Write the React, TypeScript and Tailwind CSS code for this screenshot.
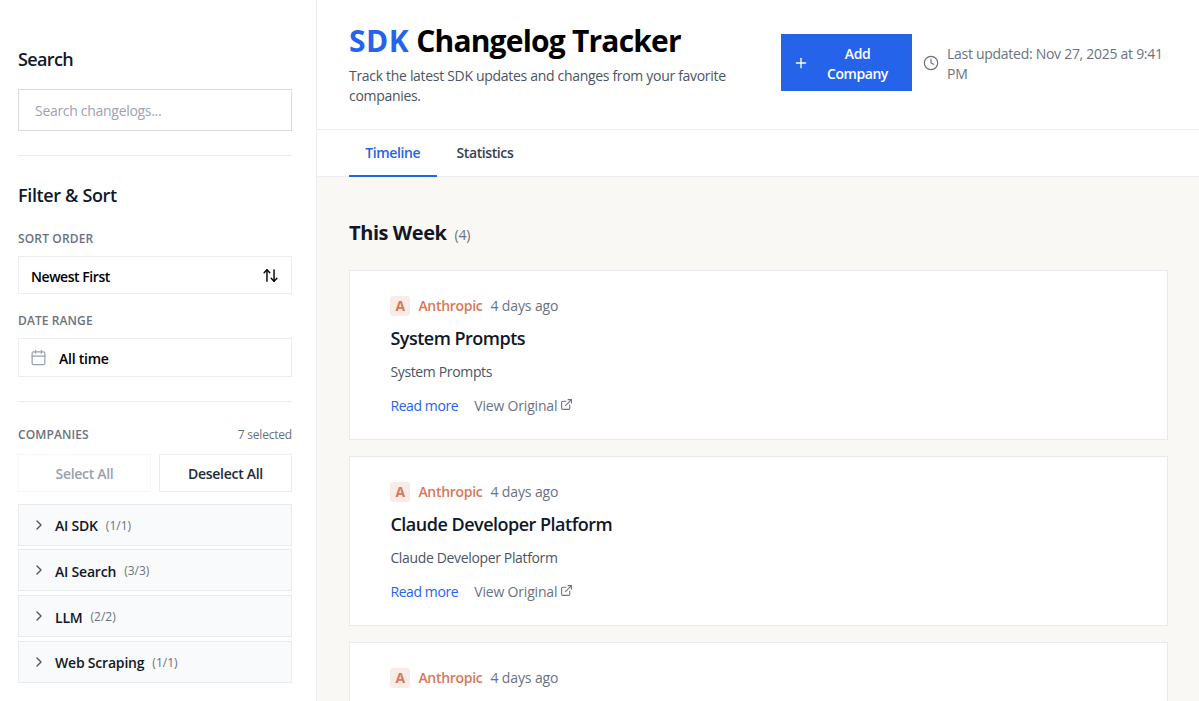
import { useState } from 'react'
import { clsx } from 'clsx'
import { ArrowUpDown, Calendar, ChevronRight, Clock, ExternalLink, Plus } from 'lucide-react'

interface Entry {
  company: string
  age: string
  title?: string
  summary?: string
}

interface Category {
  name: string
  selected: number
  total: number
}

const ENTRIES: Entry[] = [
  { company: 'Anthropic', age: '4 days ago', title: 'System Prompts', summary: 'System Prompts' },
  { company: 'Anthropic', age: '4 days ago', title: 'Claude Developer Platform', summary: 'Claude Developer Platform' },
  { company: 'Anthropic', age: '4 days ago' },
]

const CATEGORIES: Category[] = [
  { name: 'AI SDK', selected: 1, total: 1 },
  { name: 'AI Search', selected: 3, total: 3 },
  { name: 'LLM', selected: 2, total: 2 },
  { name: 'Web Scraping', selected: 1, total: 1 },
]

const TABS = ['Timeline', 'Statistics']

function Sidebar() {
  const [query, setQuery] = useState('')
  return (
    <aside className="w-[317px] shrink-0 border-r border-[#ebedf0] bg-white pr-6 pl-[18px] pt-[46px]">
      <h2 className="text-[18px] leading-[26px] font-semibold tracking-[-0.65px] text-gray-900">Search</h2>
      <input
        value={query}
        onChange={e => setQuery(e.target.value)}
        placeholder="Search changelogs..."
        className="mt-[17px] block h-[42px] w-full border border-[#d9dce2] px-4 text-[14px] tracking-[-0.3px] text-gray-900 outline-none placeholder:text-[#9ca3af]"
      />

      <div className="mt-6 border-t border-[#ebedf0] pt-[26px]">
        <h2 className="text-[18px] leading-[26px] font-semibold tracking-[-0.35px] text-gray-900">Filter &amp; Sort</h2>
        <div className="mt-[23px] text-[12px] leading-4 font-semibold tracking-[0.15px] text-gray-500">SORT ORDER</div>
        <button className="mt-[9px] flex h-[38px] w-full items-center justify-between border border-[#ebedf0] pt-[2px] pr-3 pl-3 text-[14px] font-semibold tracking-[-0.45px] text-black">
          Newest First
          <ArrowUpDown className="mb-[2px] size-[17px]" />
        </button>
        <div className="mt-[19px] text-[12px] leading-4 font-semibold tracking-[0.1px] text-gray-500">DATE RANGE</div>
        <button className="mt-[9px] flex h-[39px] w-full items-center border border-[#ebedf0] pt-[2px] pl-[11px] text-[14px] font-semibold tracking-[-0.25px] text-black">
          <Calendar className="mr-3 mb-[2px] size-[17px] text-gray-400" strokeWidth={1.75} />
          All time
        </button>
      </div>

      <div className="mt-6 border-t border-[#ebedf0] pt-[25px]">
        <div className="flex items-center justify-between text-[12px] leading-4">
          <span className="font-semibold tracking-[0.1px] text-gray-500">COMPANIES</span>
          <span className="tracking-[-0.2px] text-gray-500">7 selected</span>
        </div>
        <div className="mt-[11px] grid grid-cols-2 gap-2 text-[14px] font-semibold tracking-[-0.3px]">
          <button disabled className="h-[38px] border border-[#f5f6f7] text-gray-400">Select All</button>
          <button className="h-[38px] border border-[#ebedf0] text-gray-800">Deselect All</button>
        </div>
        <div className="mt-[11.6px] space-y-[3.8px]">
          {CATEGORIES.map(c => (
            <button key={c.name} className="flex h-[42px] w-full items-center border border-[#e8eaed] bg-gray-50 pl-3">
              <ChevronRight className="size-4 text-gray-600" />
              <span className="mt-[2px] ml-2 text-[14px] font-semibold tracking-[-0.2px] text-gray-900">{c.name}</span>
              <span className="mt-[2px] ml-2 text-[12px] text-gray-500">({c.selected}/{c.total})</span>
            </button>
          ))}
        </div>
      </div>
    </aside>
  )
}

function Header() {
  return (
    <header className="flex h-[130px] shrink-0 items-start border-b border-[#ebedf0] bg-white px-8 pt-6">
      <div className="w-[432px] shrink-0">
        <h1 className="text-[30px] leading-[33px] font-bold tracking-[-0.8px] text-black">
          <span className="tracking-[0.5px] text-[#2563eb]">SDK</span> Changelog Tracker
        </h1>
        <p className="mt-[9px] w-[400px] text-[14px] leading-[20.3px] tracking-[-0.31px] text-gray-600">
          Track the latest SDK updates and changes from your favorite companies.
        </p>
      </div>
      <button className="mt-[10px] flex h-[57px] w-[131px] shrink-0 items-center bg-[#2563eb] px-[11.5px] text-[14px] leading-5 font-semibold tracking-[-0.45px] text-white">
        <Plus className="size-4" />
        <span className="mt-[2px] ml-1.5 flex-1">Add<br />Company</span>
      </button>
      <div className="mt-5 ml-[11px] flex items-center gap-2 text-gray-500">
        <Clock className="mb-[2px] size-4 shrink-0" strokeWidth={1.75} />
        <span className="w-[224px] text-[14px] leading-5 tracking-[-0.28px]">Last updated: Nov 27, 2025 at 9:41 PM</span>
      </div>
    </header>
  )
}

function EntryCard({ entry }: { entry: Entry }) {
  return (
    <article className="h-[170px] border border-[#e8eaed] bg-white px-[40.4px] pt-[25px]">
      <div className="flex h-5 items-center text-[14px] leading-5">
        <span className="flex size-5 items-center justify-center rounded-[3px] bg-[#f9ece8] text-[14px] font-bold text-[#d97757]">{entry.company[0]}</span>
        <span className="ml-2 font-semibold tracking-[-0.3px] text-[#d97757]">{entry.company}</span>
        <span className="ml-2 tracking-[-0.12px] text-gray-500">{entry.age}</span>
      </div>
      {entry.title && (
        <>
          <h3 className="mt-2 text-[18px] leading-7 font-semibold tracking-[-0.5px] text-gray-900">{entry.title}</h3>
          <p className="mt-[10px] text-[14px] leading-5 tracking-[-0.35px] text-gray-600">{entry.summary}</p>
          <div className="mt-[14px] flex items-center text-[14px] leading-5">
            <a href="#" className="tracking-[-0.4px] text-[#2563eb]">Read more</a>
            <a href="#" className="ml-4 flex items-center gap-[3px] tracking-[-0.18px] text-gray-500">
              View Original
              <ExternalLink className="mb-[3px] size-[13px]" />
            </a>
          </div>
        </>
      )}
    </article>
  )
}

export default function App() {
  const [tab, setTab] = useState('Timeline')
  return (
    <div className="flex h-screen overflow-hidden bg-[#f9f8f4] font-['Open_Sans','Noto_Sans',sans-serif]">
      <Sidebar />
      <main className="flex min-w-0 flex-1 flex-col">
        <Header />
        <nav className="flex h-[47px] shrink-0 gap-1 border-b border-[#ebedf0] bg-white px-8 text-[14px] font-semibold">
          {TABS.map(t => (
            <button
              key={t}
              onClick={() => setTab(t)}
              className={clsx('-mb-px border-b-2 px-4 tracking-[-0.4px]', t === tab ? 'w-[87.5px] border-[#2563eb] text-[#2563eb]' : 'border-transparent text-gray-700')}
            >
              {t}
            </button>
          ))}
        </nav>
        <section className="flex-1 overflow-hidden pt-[42px] pr-[31px] pl-8">
          <div className="flex items-baseline gap-2">
            <h2 className="text-[20px] leading-7 font-bold tracking-[-0.42px] text-gray-900">This Week</h2>
            <span className="text-[14px] tracking-[-0.2px] text-gray-500">(4)</span>
          </div>
          <div className="mt-[23px] space-y-4">
            {ENTRIES.map((e, i) => <EntryCard key={i} entry={e} />)}
          </div>
        </section>
      </main>
    </div>
  )
}
